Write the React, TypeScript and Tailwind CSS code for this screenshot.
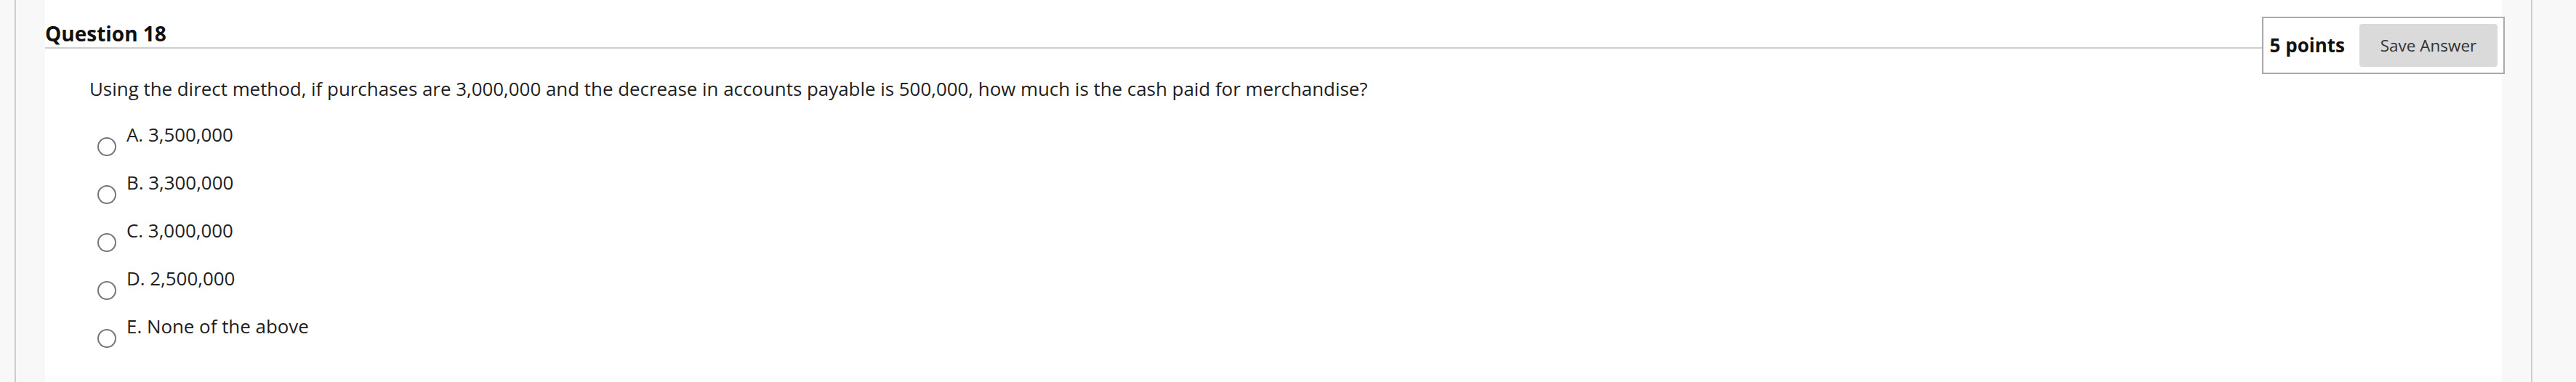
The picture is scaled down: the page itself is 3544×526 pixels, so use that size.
const options = ['A. 3,500,000', 'B. 3,300,000', 'C. 3,000,000', 'D. 2,500,000', 'E. None of the above']

function Radio() {
  return <div className="mt-[22px] h-[26px] w-[26px] shrink-0 rounded-full border-2 border-[#777777] bg-white" />
}

export default function App() {
  return (
    <div className="flex h-[526px] w-full bg-white font-['Open_Sans',sans-serif] text-[#1e1e1e]">
      <div className="w-[62px] shrink-0 bg-[#f8f8f8]">
        <div className="ml-[20px] h-full w-[2px] bg-[#cdcdcd]" />
      </div>

      <main className="flex-1 bg-white">
        <div className="flex items-start">
          <div className="flex-1 border-b-2 border-[#cfcfcf] pt-[27px]">
            <h2 className="text-[28px] leading-[38px] font-bold text-[#111111]">Question 18</h2>
          </div>
          <div className="relative z-10 -mr-[4px] mt-[23px] flex h-[79px] items-center gap-[20px] border-2 border-[#aaaaaa] bg-white pl-[9px] pr-[8px]">
            <span className="text-[26px] font-bold text-[#111111]">5 points</span>
            <button className="h-[59px] w-[190px] rounded-[4px] bg-[#dadada] text-[22.5px] text-[#333333]">
              Save Answer
            </button>
          </div>
        </div>

        <div className="mt-[2px] pl-[61px]">
          <p className="text-[25.9px] leading-[36px]">
            Using the direct method, if purchases are 3,000,000 and the decrease in accounts payable is 500,000, how much
            is the cash paid for merchandise?
          </p>
        </div>

        <ul className="mt-[27px] flex flex-col gap-[18px] pl-[72px]">
          {options.map((opt) => (
            <li key={opt} className="flex items-start gap-[14px]">
              <Radio />
              <span className="text-[25.9px] leading-[36px]">{opt}</span>
            </li>
          ))}
        </ul>
      </main>

      <div className="w-[102px] shrink-0 bg-[#f8f8f8]">
        <div className="ml-[40px] h-full w-[2px] bg-[#cdcdcd]" />
      </div>
    </div>
  )
}
